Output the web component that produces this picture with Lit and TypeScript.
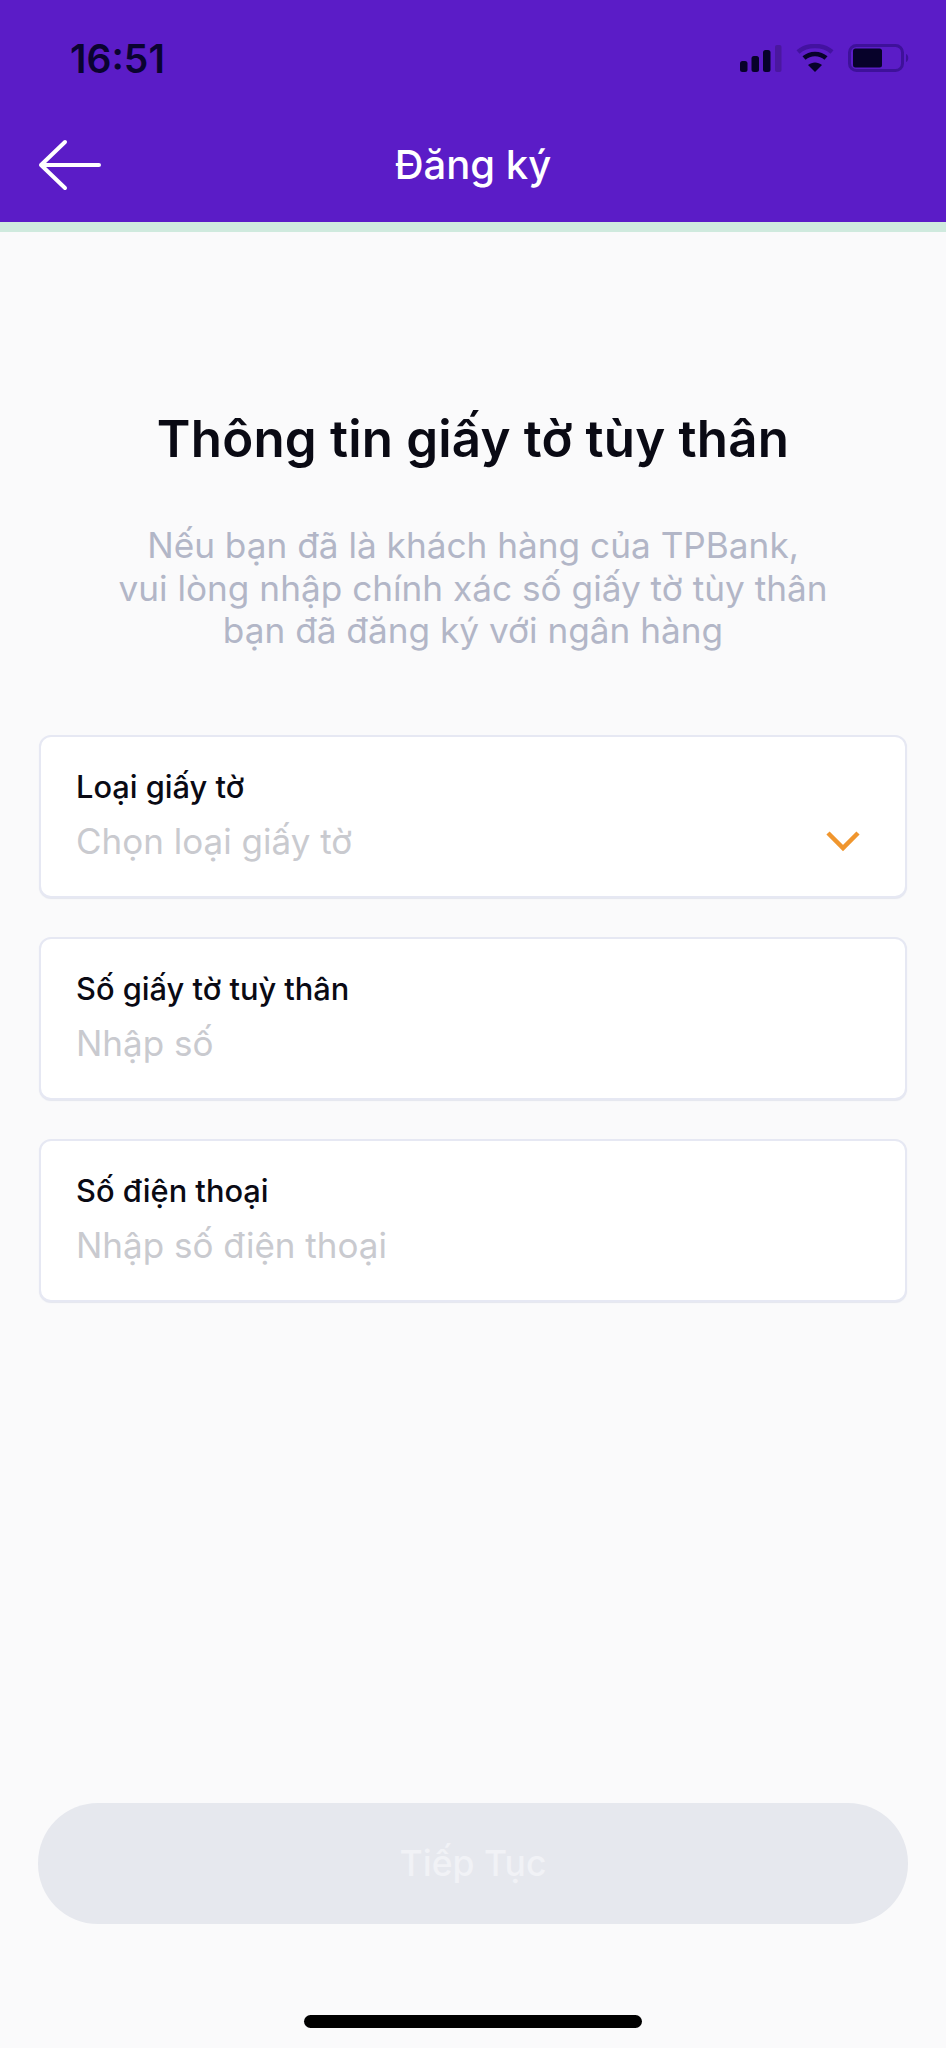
import { LitElement, html, css } from "lit";
import { customElement } from "lit/decorators.js";

@customElement("app-root")
export class AppRoot extends LitElement {
  static styles = css`
    :host {
      display: block;
      width: 946px;
      height: 2048px;
      background: #fafafb;
      font-family: Inter, "Noto Sans", sans-serif;
      overflow: hidden;
    }
    .page { display: flex; flex-direction: column; height: 2048px; }
    .top { background: #5b1cc7; height: 232px; box-sizing: border-box; border-bottom: 10px solid #cfeade; display: flex; flex-direction: column; flex: none; }
    .status { display: flex; align-items: center; justify-content: space-between; height: 58px; margin-top: 29px; padding: 0 36px 0 70px; }
    .time { font-size: 39px; font-weight: 600; color: #0a0330; line-height: 1; }
    .sys { display: flex; align-items: center; gap: 14px; }
    .sys svg { display: block; }
    .nav { flex: 1; display: grid; grid-template-columns: 1fr auto 1fr; align-items: center; padding: 21px 0 0 38px; }
    .back { display: block; }
    .title { font-size: 40px; font-weight: 500; color: #fff; line-height: 48px; padding-right: 38px; }
    .content { flex: 1; display: flex; flex-direction: column; padding: 0 38px; }
    h1 { margin: 177px 0 0; font-size: 51px; font-weight: 600; line-height: 60px; color: #0a0a14; text-align: center; letter-spacing: 0.2px; }
    .sub { margin: 55px -10px 0; font-size: 35.200px; font-weight: 400; line-height: 42.500px; color: #b2b6c7; text-align: center; }
    .cards { display: flex; flex-direction: column; gap: 39px; margin-top: 83px; }
    .card { box-sizing: border-box; height: 163px; margin: 0 1px; background: #fff; border: 2px solid #e6e8f3; border-radius: 12px; box-shadow: 0 1px 1px #e4e6ee; padding: 30px 35px 0; position: relative; }
    .label { font-size: 30.800px; font-weight: 500; line-height: 40px; color: #0a0a14; }
    .ph { font-size: 35px; line-height: 44px; color: #c9cacf; margin-top: 12px; }
    .chev { position: absolute; right: 45px; top: 93px; }
    .spacer { flex: 1; }
    .btn { height: 121px; border-radius: 60px; background: #e6e8ee; color: #f1f2f6; display: flex; align-items: center; justify-content: center; font-size: 35.500px; font-weight: 500; flex: none; }
    .homewrap { height: 124px; display: flex; justify-content: center; padding-top: 91px; box-sizing: border-box; flex: none; }
    .home { width: 338px; height: 13px; background: #000; border-radius: 7px; }
  `;

  render() {
    return html`
      <div class="page">
        <div class="top">
          <div class="status">
            <div class="time">16:51</div>
            <div class="sys">
              <svg width="42" height="28" viewBox="0 0 42 28">
                <rect x="0" y="17" width="7.500" height="11" rx="2.500" fill="#07022a"/>
                <rect x="11.500" y="12" width="7.500" height="16" rx="2.500" fill="#07022a"/>
                <rect x="23" y="6" width="7.500" height="22" rx="2.500" fill="#07022a"/>
                <rect x="35" y="1" width="6.500" height="27" rx="2" fill="#4a179f"/>
              </svg>
              <svg width="38" height="28" viewBox="0 0 38 28">
                <path d="M2 8 C11 0 27 0 36 8" fill="none" stroke="#4312a0" stroke-width="4.500"/>
                <path d="M8 14 C14 8.500 24 8.500 30 14" fill="none" stroke="#07022a" stroke-width="4.500"/>
                <path d="M19 28 L12 21 C16 17.500 22 17.500 26 21 Z" fill="#07022a"/>
              </svg>
              <svg width="62" height="28" viewBox="0 0 62 28">
                <rect x="1.500" y="1.500" width="53" height="25" rx="7" fill="none" stroke="#3e119a" stroke-width="3"/>
                <rect x="5" y="4.500" width="29" height="19" rx="2.500" fill="#07022a"/>
                <path d="M58 10 C61 11 61 17 58 18 Z" fill="#3e119a"/>
              </svg>
            </div>
          </div>
          <div class="nav">
            <svg class="back" width="64" height="52" viewBox="0 0 64 52">
              <path d="M27 3 L3 26 L27 49 M3 26 L61 26" fill="none" stroke="#fff" stroke-width="4" stroke-linecap="round" stroke-linejoin="round"/>
            </svg>
            <div class="title">Đăng ký</div>
          </div>
        </div>
        <div class="content">
          <h1>Thông tin giấy tờ tùy thân</h1>
          <p class="sub">Nếu bạn đã là khách hàng của TPBank,<br>vui lòng nhập chính xác số giấy tờ tùy thân<br>bạn đã đăng ký với ngân hàng</p>
          <div class="cards">
            <div class="card">
              <div class="label">Loại giấy tờ</div>
              <div class="ph">Chọn loại giấy tờ</div>
              <svg class="chev" width="34" height="22" viewBox="0 0 34 22">
                <path d="M2 3 L17 18 L32 3" fill="none" stroke="#f0962e" stroke-width="4.500"/>
              </svg>
            </div>
            <div class="card">
              <div class="label">Số giấy tờ tuỳ thân</div>
              <div class="ph">Nhập số</div>
            </div>
            <div class="card">
              <div class="label">Số điện thoại</div>
              <div class="ph">Nhập số điện thoại</div>
            </div>
          </div>
          <div class="spacer"></div>
          <div class="btn">Tiếp Tục</div>
        </div>
        <div class="homewrap"><div class="home"></div></div>
      </div>
    `;
  }
}
